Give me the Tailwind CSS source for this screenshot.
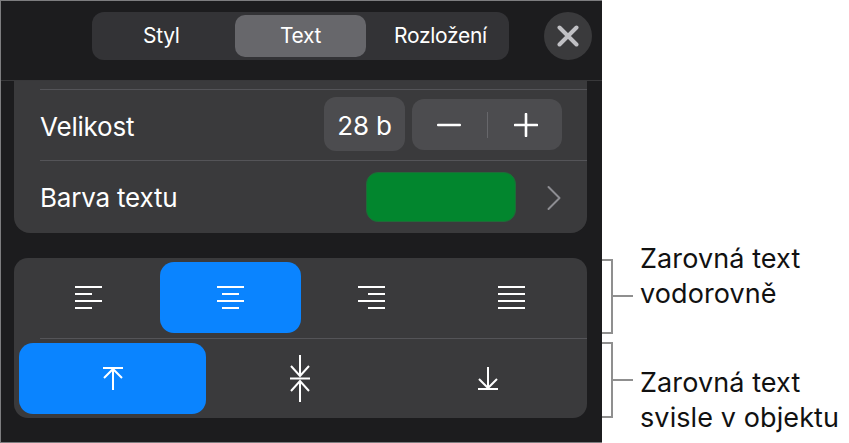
<!DOCTYPE html>
<html lang="cs">
<head>
<meta charset="utf-8">
<script src="https://cdn.jsdelivr.net/npm/@tailwindcss/browser@4"></script>
</head>
<body class="bg-white font-['Inter','Liberation_Sans',sans-serif] overflow-hidden">
<div class="flex w-[849px] h-[443px]">
  <div class="w-[602px] h-[443px] shrink-0 bg-[#1c1c1e] border-l border-t border-b border-[#7d7d7f] flex flex-col">
    <header class="h-[80px] shrink-0 border-b border-[#38383a] flex items-start pt-[11px] pl-[91px]">
      <div class="w-[417px] h-[48px] rounded-[12px] bg-[#333336] flex items-center pl-[143px] relative text-white text-[21px] tracking-[-0.3px]">
        <div class="w-[131px] h-[42px] rounded-[10px] bg-[#67676b] flex items-center justify-center">Text</div>
        <span class="absolute left-[51px]">Styl</span>
        <span class="absolute left-[302px]">Rozložení</span>
      </div>
      <button class="ml-[35px] w-[48px] h-[48px] rounded-full bg-[#3a3a3c] flex items-center justify-center">
        <svg width="22" height="22" viewBox="0 0 22 22"><path d="M2.5 2.5L19.5 19.5M19.5 2.5L2.5 19.5" stroke="#c0c0c4" stroke-width="4" stroke-linecap="round"/></svg>
      </button>
    </header>
    <section class="ml-[13px] w-[573px] h-[152px] shrink-0 bg-[#3a3a3c] rounded-b-[16px] pl-[26px] text-white text-[26px] tracking-[-0.2px]">
      <div class="h-[9px] border-b border-[#545458]"></div>
      <div class="h-[71px] border-b border-[#545458] flex items-center relative">
        <span class="pt-[2px]">Velikost</span>
        <div class="absolute left-[284px] top-[7px] w-[81px] h-[54px] rounded-[12px] bg-[#4c4c4f] flex items-center justify-center pt-[2px]">28 b</div>
        <div class="absolute left-[372px] top-[9px] w-[150px] h-[51px] rounded-[12px] bg-[#4c4c4f] flex items-center justify-center gap-[26px]">
          <svg width="24" height="4" viewBox="0 0 24 4"><rect width="24" height="2.6" y="0.7" rx="1" fill="#fff"/></svg>
          <div class="w-px h-[26px] bg-[#67676b]"></div>
          <svg width="24" height="24" viewBox="0 0 24 24"><path d="M12 1V23M1 12H23" stroke="#fff" stroke-width="2.6" stroke-linecap="round"/></svg>
        </div>
      </div>
      <div class="h-[71px] flex items-center relative">
        <span class="pt-[2px]">Barva textu</span>
        <div class="absolute left-[326px] top-[11px] w-[150px] h-[50px] rounded-[12px] bg-[#02862e] border border-[#1f6b38]"></div>
        <svg class="absolute left-[506px] top-[24px]" width="16" height="26" viewBox="0 0 16 26"><path d="M2.5 2L13.5 13L2.5 24" fill="none" stroke="#8d8d92" stroke-width="2" stroke-linecap="round" stroke-linejoin="round"/></svg>
      </div>
    </section>
    <section class="ml-[13px] mt-[25px] w-[573px] h-[160px] shrink-0 bg-[#3a3a3c] rounded-[14px] flex flex-col">
      <div class="h-[80px] grid grid-cols-[146px_141px_141px_145px] pt-[4px]">
        <div class="h-[71px] flex items-center justify-center pl-[3px]">
          <svg width="27" height="23" viewBox="0 0 27 23"><path d="M0 1H27M0 8H17M0 15H27M0 22H17" stroke="#fff" stroke-width="2"/></svg>
        </div>
        <div class="h-[71px] rounded-[14px] bg-[#0a84ff] flex items-center justify-center">
          <svg width="27" height="23" viewBox="0 0 27 23"><path d="M0 1H27M5 8H22M0 15H27M5 22H22" stroke="#fff" stroke-width="2"/></svg>
        </div>
        <div class="h-[71px] flex items-center justify-center">
          <svg width="27" height="23" viewBox="0 0 27 23"><path d="M0 1H27M10 8H27M0 15H27M10 22H27" stroke="#fff" stroke-width="2"/></svg>
        </div>
        <div class="h-[71px] flex items-center justify-center pr-[6px]">
          <svg width="27" height="23" viewBox="0 0 27 23"><path d="M0 1H27M0 8H27M0 15H27M0 22H27" stroke="#fff" stroke-width="2"/></svg>
        </div>
      </div>
      <div class="ml-[26px] h-px bg-[#545458]"></div>
      <div class="flex-1 grid grid-cols-[187px_188px_188px] pt-[4px] pl-[5px]">
        <div class="h-[71px] rounded-[14px] bg-[#0a84ff] flex items-center justify-center">
          <svg width="20" height="23" viewBox="0 0 20 23"><path d="M0 1H20M10 23V2M1 11L10 2L19 11" fill="none" stroke="#fff" stroke-width="2"/></svg>
        </div>
        <div class="h-[71px] flex items-center justify-center">
          <svg width="20" height="47" viewBox="0 0 20 47"><path d="M10 0V21M1 11L10 21L19 11M0 23.5H20M10 47V26M1 36L10 26L19 36" fill="none" stroke="#fff" stroke-width="2"/></svg>
        </div>
        <div class="h-[71px] flex items-center justify-center">
          <svg width="20" height="23" viewBox="0 0 20 23"><path d="M0 22H20M10 0V21M1 12L10 21L19 12" fill="none" stroke="#fff" stroke-width="2"/></svg>
        </div>
      </div>
    </section>
  </div>
  <aside class="flex-1 text-[#111] text-[27px] leading-[35px] tracking-[0.1px]">
    <div class="flex h-[76px] mt-[258px]">
      <div class="self-center w-[11px] h-[75px] border-t-2 border-r-2 border-b-2 border-[#8f8f8f]"></div>
      <div class="self-center w-[20px] h-[2px] bg-[#8f8f8f]"></div>
      <div class="ml-[7px] -mt-[17px] whitespace-nowrap">Zarovná text<br>vodorovně</div>
    </div>
    <div class="flex h-[76px] mt-[8px]">
      <div class="self-center w-[11px] h-[76px] border-t-2 border-r-2 border-b-2 border-[#8f8f8f]"></div>
      <div class="self-center w-[20px] h-[2px] bg-[#8f8f8f]"></div>
      <div class="ml-[7px] mt-[23px] whitespace-nowrap">Zarovná text<br>svisle v objektu</div>
    </div>
  </aside>
</div>
</body>
</html>
